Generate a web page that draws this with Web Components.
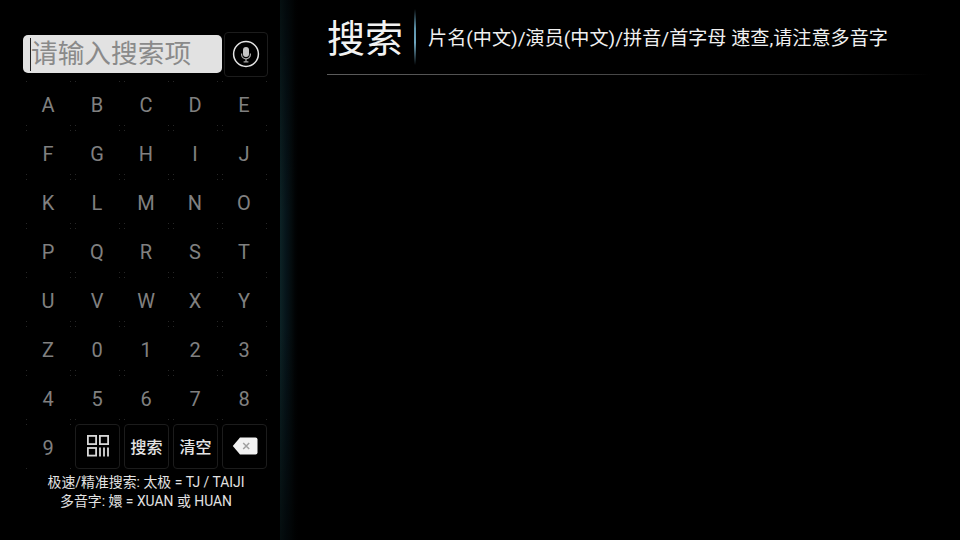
<!DOCTYPE html>
<html>
<head>
<meta charset="utf-8">
<style>
    html, body {
        margin: 0;
        height: 540px;
        overflow: hidden;
        background: #000;
        font-family: Roboto, "Noto Sans CJK SC", sans-serif;
    }
</style>
</head>
<body>
<search-page></search-page>

<template id="search-page-template">
    <style>
        :host {
            display: flex;
            width: 960px;
            height: 540px;
            background: #000;
        }
        .strip {
            flex: 0 0 18px;
            background:
                linear-gradient(to bottom, rgba(0,0,0,.55), transparent 40%, transparent 60%, rgba(0,0,0,.6)),
                linear-gradient(to right, #0c2226 0, #0b1e21 2px, #06141a 6px, #040c0e 11px, #010304 15px, #000 18px);
        }
    </style>
    <search-panel></search-panel>
    <div class="strip"></div>
    <title-bar></title-bar>
</template>

<template id="search-panel-template">
    <style>
        :host {
            display: flex;
            flex-direction: column;
            flex: 0 0 280px;
            padding-top: 32px;
            box-sizing: border-box;
        }
        .top {
            display: flex;
            align-items: center;
            gap: 2px;
            margin-left: 23px;
        }
        .field {
            box-sizing: border-box;
            width: 199px;
            height: 38px;
            margin-top: -1px;
            padding-left: 7px;
            background: #e2e2e2;
            border-radius: 5px;
            display: flex;
            align-items: center;
            color: #8a8a8a;
            font-size: 26.7px;
            white-space: nowrap;
        }
        .field span.text {
            margin-top: -5px;
        }
        .caret {
            width: 1px;
            height: 33px;
            background: #222;
        }
        .pad {
            display: grid;
            grid-template-columns: repeat(5, 45px);
            grid-auto-rows: 45px;
            gap: 4px;
            margin: 4px 0 0 26px;
        }
        .help {
            margin: 4px 0 0 12px;
            text-align: center;
            color: #e2e2e2;
            font-size: 13.9px;
            line-height: 19px;
        }
        svg { display: block; }
    </style>
    <div class="top">
        <div class="field"><span class="caret"></span><span class="text">请输入搜索项</span></div>
        <pad-button style="width:44px">
            <svg width="30" height="30" viewBox="0 0 30 30">
                <circle cx="15" cy="15" r="12.4" fill="none" stroke="#e4e4e4" stroke-width="1.5"/>
                <rect x="12" y="8" width="6" height="10" rx="3" fill="#c4c4c4"/>
                <path d="M10.6 14.5v1a4.4 4.4 0 0 0 8.8 0v-1" fill="none" stroke="#a8a8a8" stroke-width="1.2"/>
                <path d="M15 19.9v3M12.6 22.9h4.8" fill="none" stroke="#a8a8a8" stroke-width="1.2"/>
            </svg>
        </pad-button>
    </div>
    <div class="pad" id="pad"></div>
    <div class="help">极速/精准搜索: 太极 = TJ / TAIJI<br>多音字: 嬛 = XUAN 或 HUAN</div>
</template>

<template id="pad-key-template">
    <style>
        :host {
            display: flex;
            align-items: center;
            justify-content: center;
            padding: 3px 1px 0 0;
            box-sizing: border-box;
            height: 45px;
            color: #808080;
            font-size: 20px;
            background:
                linear-gradient(#262626, #262626) 0 0 / 1px 1px no-repeat,
                linear-gradient(#262626, #262626) 100% 0 / 1px 1px no-repeat,
                linear-gradient(#262626, #262626) 0 100% / 1px 1px no-repeat,
                linear-gradient(#262626, #262626) 100% 100% / 1px 1px no-repeat;
        }
    </style>
    <slot></slot>
</template>

<template id="pad-button-template">
    <style>
        :host {
            display: flex;
            align-items: center;
            justify-content: center;
            box-sizing: border-box;
            height: 45px;
            padding-bottom: 2px;
            border: 1px solid #1c1c1c;
            border-radius: 4px;
            color: #e4e4e4;
            font-size: 16px;
            font-weight: 500;
        }
    </style>
    <slot></slot>
</template>

<template id="title-bar-template">
    <style>
        :host {
            display: block;
            flex: 1;
            padding-left: 29px;
        }
        .head {
            display: flex;
            align-items: center;
            height: 74px;
            width: 603px;
            box-sizing: border-box;
            padding-top: 3px;
        }
        h1 {
            margin: -6px 0 0;
            font-size: 38px;
            font-weight: 400;
            color: #f2f2f2;
            white-space: nowrap;
        }
        .sep {
            width: 2px;
            height: 56px;
            margin: -3px 12px 0 11px;
            background: linear-gradient(to bottom, transparent, #5f95ad 35%, #6ea6bf 60%, transparent);
        }
        p {
            margin: -3px 0 0;
            font-size: 19.12px;
            color: #f0f0f0;
            white-space: nowrap;
        }
        .rule {
            width: 603px;
            height: 1px;
            background: linear-gradient(to right, #5c5c5c, #444 55%, #222 85%, #000);
        }
    </style>
    <div class="head">
        <h1>搜索</h1>
        <div class="sep"></div>
        <p>片名(中文)/演员(中文)/拼音/首字母 速查,请注意多音字</p>
    </div>
    <div class="rule"></div>
</template>

<script>
    // all the elements here only clone their template, so share that
    class TemplatedElement extends HTMLElement {
        constructor(id) {
            super();
            const template = document.querySelector(id);
            const clone = document.importNode(template.content, true);
            this.attachShadow({ mode: 'open' }).appendChild(clone);
        }
    }

    customElements.define('pad-key', class extends TemplatedElement {
        constructor() { super('#pad-key-template'); }
    });

    customElements.define('pad-button', class extends TemplatedElement {
        constructor() { super('#pad-button-template'); }
    });

    customElements.define('title-bar', class extends TemplatedElement {
        constructor() { super('#title-bar-template'); }
    });

    customElements.define('search-panel', class extends TemplatedElement {
        constructor() { super('#search-panel-template'); }

        connectedCallback() {
            const pad = this.shadowRoot.querySelector('#pad');
            if (pad.children.length) return;
            for (const ch of 'ABCDEFGHIJKLMNOPQRSTUVWXYZ0123456789') {
                const key = document.createElement('pad-key');
                key.textContent = ch;
                pad.appendChild(key);
            }
            const qr = document.createElement('pad-button');
            qr.innerHTML = `<svg width="23" height="23" viewBox="0 0 23 23" style="display:block">
                <g fill="none" stroke="#d8d8d8" stroke-width="1.8">
                    <rect x="1.9" y="1.9" width="8.2" height="8.2"/>
                    <rect x="13.9" y="1.9" width="8.2" height="8.2"/>
                    <rect x="1.9" y="14" width="8.2" height="7.6"/>
                    <path d="M14 13.5v9M18 13.5v9M22 13.5v9"/>
                </g></svg>`;
            pad.appendChild(qr);
            for (const label of ['搜索', '清空']) {
                const btn = document.createElement('pad-button');
                btn.textContent = label;
                pad.appendChild(btn);
            }
            const del = document.createElement('pad-button');
            del.innerHTML = `<svg width="26" height="18" viewBox="0 0 26 18" style="display:block">
                <path d="M8 .5H23.5a2 2 0 0 1 2 2v13a2 2 0 0 1-2 2H8L.8 9z" fill="#f2f2f2"/>
                <path d="M11.2 6l6 6M17.2 6l-6 6" stroke="#a0a0a0" stroke-width="1.5"/></svg>`;
            pad.appendChild(del);
        }
    });

    customElements.define('search-page', class extends TemplatedElement {
        constructor() { super('#search-page-template'); }
    });
</script>
</body>
</html>
